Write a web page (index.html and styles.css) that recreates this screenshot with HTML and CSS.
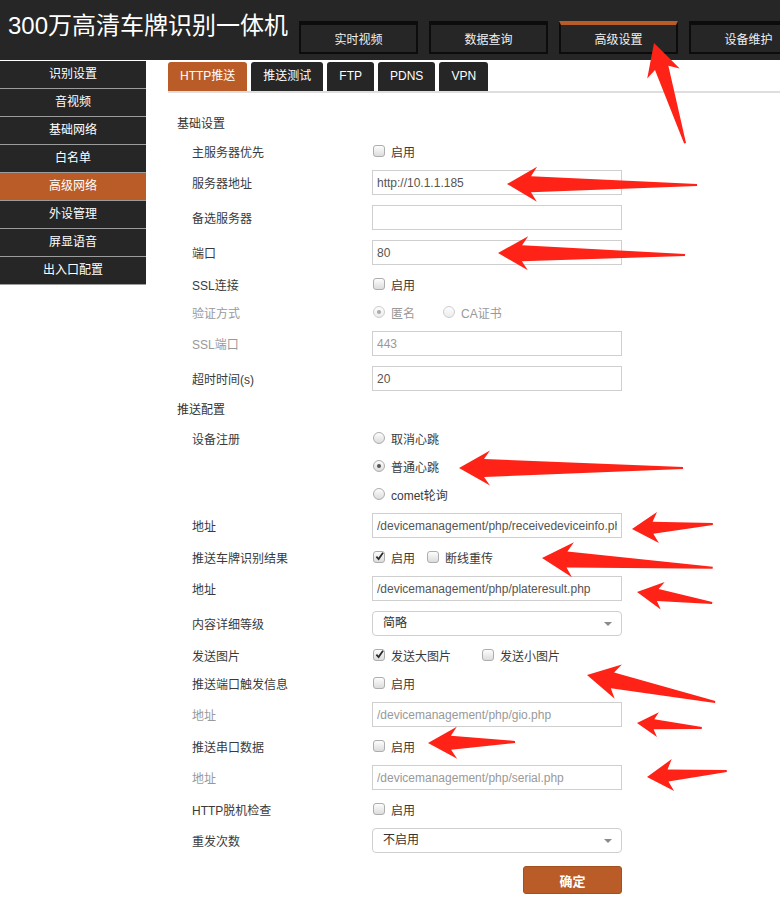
FILE: index.html
```html
<!DOCTYPE html>
<html lang="zh-CN">
<head>
<meta charset="utf-8">
<title>300万高清车牌识别一体机</title>
<link rel="stylesheet" href="styles.css">
</head>
<body>
<div class="header">
  <div class="title">300万高清车牌识别一体机</div>
  <div class="nav">
    <div class="nav-btn">实时视频</div>
    <div class="nav-btn">数据查询</div>
    <div class="nav-btn active">高级设置</div>
    <div class="nav-btn">设备维护</div>
  </div>
</div>
<div class="main">
  <div class="sidebar">
    <div class="side-item">识别设置</div>
    <div class="side-item">音视频</div>
    <div class="side-item">基础网络</div>
    <div class="side-item">白名单</div>
    <div class="side-item active">高级网络</div>
    <div class="side-item">外设管理</div>
    <div class="side-item">屏显语音</div>
    <div class="side-item">出入口配置</div>
  </div>
  <div class="content">
    <div class="tabs">
      <div class="tab active">HTTP推送</div>
      <div class="tab">推送测试</div>
      <div class="tab">FTP</div>
      <div class="tab">PDNS</div>
      <div class="tab">VPN</div>
    </div>
    <div class="form">
      <div class="section top">基础设置</div>
      <div class="row short"><div class="label">主服务器优先</div><div class="ctrl"><span class="cb"></span><span class="opt">启用</span></div></div>
      <div class="row"><div class="label">服务器地址</div><div class="ctrl"><input class="text" type="text" value="http://10.1.1.185"></div></div>
      <div class="row"><div class="label">备选服务器</div><div class="ctrl"><input class="text" type="text" value=""></div></div>
      <div class="row"><div class="label">端口</div><div class="ctrl"><input class="text" type="text" value="80"></div></div>
      <div class="row short"><div class="label">SSL连接</div><div class="ctrl"><span class="cb"></span><span class="opt">启用</span></div></div>
      <div class="row short"><div class="label dis">验证方式</div><div class="ctrl"><span class="rd dis on"></span><span class="opt dis gap-m">匿名</span><span class="rd dis"></span><span class="opt dis">CA证书</span></div></div>
      <div class="row"><div class="label dis">SSL端口</div><div class="ctrl"><input class="text dis" type="text" value="443"></div></div>
      <div class="row"><div class="label">超时时间(s)</div><div class="ctrl"><input class="text" type="text" value="20"></div></div>
      <div class="section">推送配置</div>
      <div class="row short"><div class="label">设备注册</div><div class="ctrl"><span class="rd"></span><span class="opt">取消心跳</span></div></div>
      <div class="row short"><div class="label"></div><div class="ctrl"><span class="rd on"></span><span class="opt">普通心跳</span></div></div>
      <div class="row short"><div class="label"></div><div class="ctrl"><span class="rd"></span><span class="opt">comet轮询</span></div></div>
      <div class="row"><div class="label">地址</div><div class="ctrl"><input class="text" type="text" value="/devicemanagement/php/receivedeviceinfo.php"></div></div>
      <div class="row short"><div class="label">推送车牌识别结果</div><div class="ctrl"><span class="cb on"><svg viewBox="0 0 12 12"><path d="M2.6 6.2 L5 8.8 L9.8 1.8" /></svg></span><span class="opt gap-s">启用</span><span class="cb"></span><span class="opt">断线重传</span></div></div>
      <div class="row"><div class="label">地址</div><div class="ctrl"><input class="text" type="text" value="/devicemanagement/php/plateresult.php"></div></div>
      <div class="row"><div class="label">内容详细等级</div><div class="ctrl"><div class="select">简略<span class="caret"></span></div></div></div>
      <div class="row short"><div class="label">发送图片</div><div class="ctrl"><span class="cb on"><svg viewBox="0 0 12 12"><path d="M2.6 6.2 L5 8.8 L9.8 1.8" /></svg></span><span class="opt gap-l">发送大图片</span><span class="cb"></span><span class="opt">发送小图片</span></div></div>
      <div class="row short"><div class="label">推送端口触发信息</div><div class="ctrl"><span class="cb"></span><span class="opt">启用</span></div></div>
      <div class="row"><div class="label dis">地址</div><div class="ctrl"><input class="text dis" type="text" value="/devicemanagement/php/gio.php"></div></div>
      <div class="row short"><div class="label">推送串口数据</div><div class="ctrl"><span class="cb"></span><span class="opt">启用</span></div></div>
      <div class="row"><div class="label dis">地址</div><div class="ctrl"><input class="text dis" type="text" value="/devicemanagement/php/serial.php"></div></div>
      <div class="row short"><div class="label">HTTP脱机检查</div><div class="ctrl"><span class="cb"></span><span class="opt">启用</span></div></div>
      <div class="row"><div class="label">重发次数</div><div class="ctrl"><div class="select">不启用<span class="caret"></span></div></div></div>
      <div class="btn-row"><div class="label"></div><div class="ctrl end"><div class="btn">确定</div></div></div>
    </div>
  </div>
</div>
<svg class="arrows" width="780" height="900" viewBox="0 0 780 900">
  <g fill="#ff2216">
    <polygon transform="translate(654,43) rotate(72.8)" points="0,0 32,-17 26,-7 105,-1 105,1 26,7 32,17"/>
    <polygon transform="translate(507,184) rotate(0.3)" points="0,0 30,-17.5 24,-8 190,-1 190,1 24,8 30,17.5"/>
    <polygon transform="translate(498,253) rotate(0.6)" points="0,0 30,-17 24,-8 187,-1 187,1 24,8 30,17"/>
    <polygon transform="translate(459,468) rotate(0)" points="0,0 31,-17.5 25,-9 224,-1 224,1 25,9 31,17.5"/>
    <polygon transform="translate(632,529) rotate(-3.5)" points="0,0 26,-15.5 21,-6 81,-1 81,1 21,6 26,15.5"/>
    <polygon transform="translate(542,558) rotate(3.3)" points="0,0 31,-17.5 25,-8 171,-1 171,1 25,8 31,17.5"/>
    <polygon transform="translate(637,592) rotate(8.3)" points="0,0 26,-14 21,-6 76,-1 76,1 21,6 26,14"/>
    <polygon transform="translate(587,675) rotate(11.9)" points="0,0 32,-17.5 26,-8 131,-1 131,1 26,8 32,17.5"/>
    <polygon transform="translate(637,723) rotate(4.4)" points="0,0 21,-12.5 17,-5 65,-1 65,1 17,5 21,12.5"/>
    <polygon transform="translate(428,743) rotate(-0.7)" points="0,0 29,-16 23,-7 87,-1 87,1 23,7 29,16"/>
    <polygon transform="translate(647,777) rotate(-4.3)" points="0,0 26,-16 21,-6 80,-1 80,1 21,6 26,16"/>
  </g>
</svg>
</body>
</html>
```
FILE: styles.css
```css
html, body {
  margin: 0;
  padding: 0;
}
body {
  position: relative;
  width: 780px;
  height: 900px;
  overflow: hidden;
  background: #fff;
  font-family: "Liberation Sans", "Noto Sans CJK SC", sans-serif;
  font-size: 12px;
  color: #333;
}
.header {
  height: 60px;
  background: #262626;
  display: flex;
  overflow: hidden;
}
.title {
  width: 299px;
  flex-shrink: 0;
  box-sizing: border-box;
  padding-left: 8px;
  font-size: 24px;
  line-height: 52px;
  color: #fff;
  white-space: nowrap;
  overflow: hidden;
}
.nav {
  display: flex;
  gap: 11px;
  align-self: flex-end;
  margin-bottom: 6px;
}
.nav-btn {
  flex-shrink: 0;
  width: 119px;
  height: 33px;
  box-sizing: border-box;
  border: 2px solid #0c0c0c;
  border-top: 4px solid #0c0c0c;
  background: #262626;
  color: #f0f0f0;
  font-size: 12px;
  display: flex;
  align-items: center;
  justify-content: center;
  white-space: nowrap;
}
.nav-btn.active {
  border-top-color: #b95c28;
}
.main {
  display: flex;
  margin-top: 1px;
}
.sidebar {
  width: 146px;
  flex-shrink: 0;
  align-self: flex-start;
}
.side-item {
  height: 27px;
  line-height: 27px;
  border-bottom: 1px solid #9c9c9c;
  background: #262626;
  color: #fff;
  text-align: center;
  font-size: 12px;
}
.side-item.active {
  background: #ba5c28;
}
.content {
  flex: 1;
  padding-left: 22px;
}
.tabs {
  display: flex;
  gap: 4px;
  margin-top: 1px;
  border-bottom: 2px solid #dedede;
}
.tab {
  height: 29px;
  line-height: 29px;
  padding: 0 12px;
  background: #262626;
  color: #fff;
  font-size: 12px;
  border-radius: 3px 3px 0 0;
  white-space: nowrap;
}
.tab.active {
  background: #ba5c28;
}
.form {
  padding-top: 18px;
}
.section {
  height: 28px;
  line-height: 28px;
  padding-left: 9px;
  font-size: 12px;
  color: #333;
}
.section.top {
  height: 26px;
  line-height: 26px;
}
.row, .btn-row {
  display: flex;
  align-items: center;
  height: 35px;
}
.row.short {
  height: 28px;
}
.btn-row {
  height: 28px;
  margin-top: 8px;
}
.label {
  width: 180px;
  margin-left: 24px;
  flex-shrink: 0;
  color: #3a3a3a;
  white-space: nowrap;
}
.label.dis {
  color: #999;
}
.ctrl {
  width: 250px;
  display: flex;
  align-items: center;
}
.ctrl.end {
  justify-content: flex-end;
}
.text {
  width: 250px;
  height: 25px;
  box-sizing: border-box;
  margin: 0;
  border: 1px solid #cfcfcf;
  padding: 0 4px;
  font-family: "Liberation Sans", "Noto Sans CJK SC", sans-serif;
  font-size: 12px;
  color: #555;
  background: #fff;
  outline: none;
}
.text.dis {
  color: #999;
}
.cb, .rd {
  display: inline-block;
  width: 12px;
  height: 12px;
  box-sizing: border-box;
  border: 1px solid #adadad;
  background: linear-gradient(#fdfdfd, #dcdcdc);
  margin-left: 1px;
  margin-right: 6px;
  position: relative;
  flex-shrink: 0;
}
.cb {
  border-radius: 3px;
}
.cb svg {
  position: absolute;
  left: 0;
  top: -1px;
  width: 11px;
  height: 11px;
  overflow: visible;
}
.cb svg path {
  fill: none;
  stroke: #2a2a2a;
  stroke-width: 1.9;
}
.rd {
  border-radius: 50%;
}
.rd.on::after {
  content: "";
  position: absolute;
  left: 3px;
  top: 3px;
  width: 4px;
  height: 4px;
  border-radius: 50%;
  background: #555;
}
.rd.dis {
  border-color: #cdcdcd;
  background: linear-gradient(#fdfdfd, #ececec);
}
.rd.dis.on::after {
  background: #aaa;
}
.opt {
  color: #3a3a3a;
  white-space: nowrap;
}
.opt.dis {
  color: #999;
}
.gap-s {
  margin-right: 11px;
}
.gap-m {
  margin-right: 27px;
}
.gap-l {
  margin-right: 30px;
}
.select {
  position: relative;
  width: 250px;
  height: 25px;
  box-sizing: border-box;
  border: 1px solid #cfcfcf;
  border-radius: 4px;
  padding-left: 10px;
  line-height: 23px;
  color: #333;
  background: #fff;
}
.caret {
  position: absolute;
  right: 9px;
  top: 10px;
  width: 0;
  height: 0;
  border-left: 4px solid transparent;
  border-right: 4px solid transparent;
  border-top: 4px solid #8a8a8a;
}
.btn {
  width: 99px;
  height: 28px;
  box-sizing: border-box;
  border: 1px solid #a44f20;
  border-radius: 3px;
  background: #ba5c28;
  color: #fff;
  font-size: 13px;
  font-weight: bold;
  display: flex;
  align-items: center;
  justify-content: center;
}
.arrows {
  position: absolute;
  left: 0;
  top: 0;
  pointer-events: none;
}
```
